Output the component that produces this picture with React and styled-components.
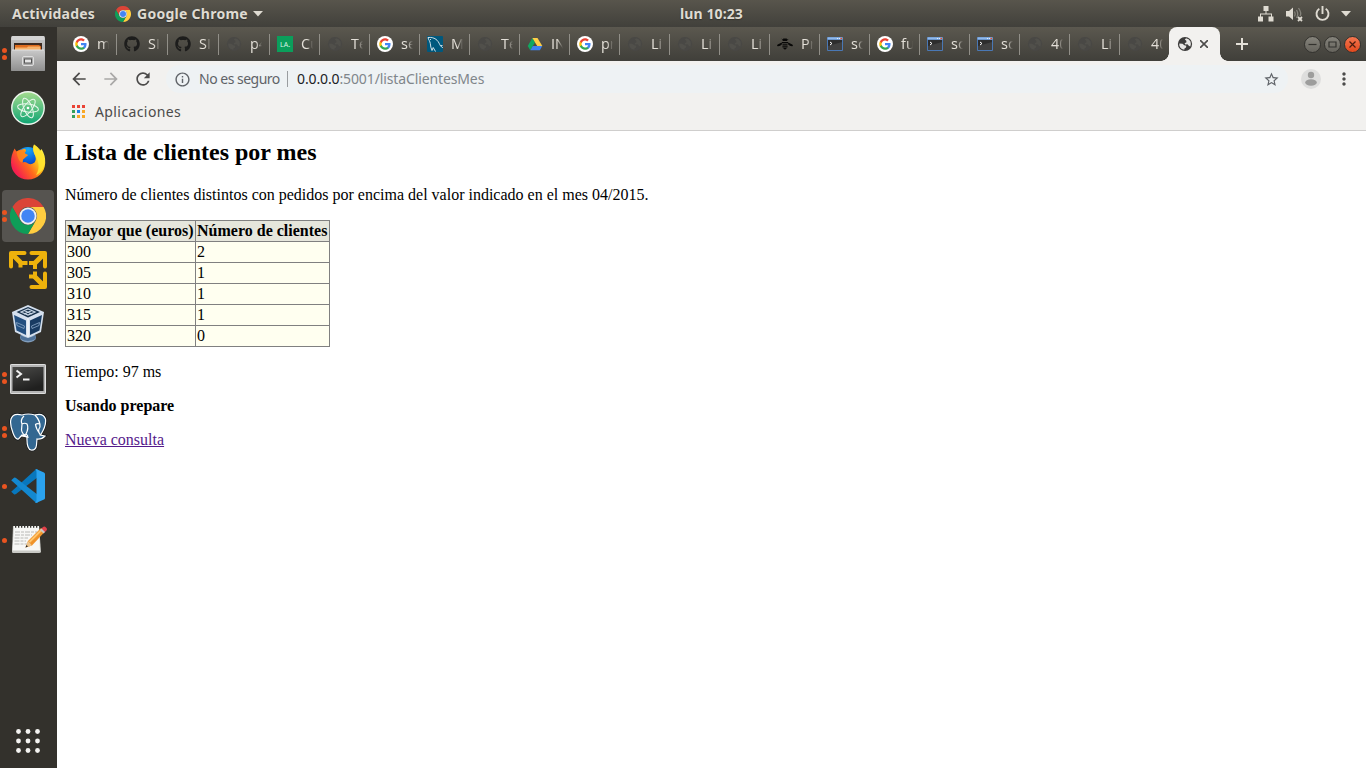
import React from "react";
import styled, { createGlobalStyle, css } from "styled-components";
import { FaGithub } from "react-icons/fa";
import {
  MdArrowBack,
  MdArrowForward,
  MdRefresh,
  MdInfoOutline,
  MdStarBorder,
  MdMoreVert,
} from "react-icons/md";

const GlobalStyle = createGlobalStyle`
  html, body, #root { height: 100%; }
  body { margin: 0; overflow: hidden; background: #fff; }
  * { box-sizing: border-box; }
  svg { display: block; flex: none; }
`;

const uiFont = css`
  font-family: "Noto Sans", "Open Sans", sans-serif;
`;

const Desktop = styled.div`
  width: 1366px;
  height: 768px;
  display: flex;
  flex-direction: column;
  ${uiFont}
`;

const TopBar = styled.header`
  height: 27px;
  flex: none;
  display: grid;
  grid-template-columns: 668px auto 1fr;
  align-items: center;
  padding: 0 15px 0 12px;
  background: linear-gradient(#58554c, #41403b);
  color: #dfdbd2;
  font-size: 14px;
  font-weight: 700;
  line-height: 26px;
  white-space: nowrap;
`;

const TopLeft = styled.div`
  display: flex;
  align-items: center;
`;

const TopLabel = styled.span`
  letter-spacing: ${(p) => p.$spacing || "0"};
  width: ${(p) => p.$width};
  margin-right: ${(p) => p.$gap || "0"};
  text-shadow: 0 1px 1px #33322d;
`;

const AppMenu = styled.div`
  display: flex;
  align-items: center;
  gap: 6px;
`;

const TopRight = styled.div`
  display: flex;
  align-items: center;
  justify-content: flex-end;
`;

const StatusIcon = styled.span`
  margin-left: ${(p) => p.$gap}px;
`;

const Body = styled.div`
  flex: 1;
  min-height: 0;
  display: flex;
`;

const Dock = styled.nav`
  width: 57px;
  flex: none;
  display: flex;
  flex-direction: column;
  background: #33312c;
`;

const DockItem = styled.div`
  height: 54px;
  flex: none;
  display: flex;
  align-items: center;
  padding-left: 2px;
`;

const DockTile = styled.div`
  width: 52px;
  height: 52px;
  display: flex;
  align-items: center;
  border-radius: 4px;
  background: ${(p) => (p.$active ? "#565450" : "transparent")};
`;

const DockDots = styled.div`
  width: 6px;
  display: flex;
  flex-direction: column;
  gap: 2px;
`;

const DockDot = styled.i`
  width: 5px;
  height: 5px;
  border-radius: 50%;
  background: #e95420;
`;

const DockIcon = styled.span`
  display: flex;
  align-items: center;
  justify-content: center;
  width: 40px;
  height: 40px;
`;

const AppsButton = styled.div`
  margin-top: auto;
  height: 54px;
  padding: 14px 0 0 15px;
`;

const Browser = styled.main`
  flex: 1;
  min-width: 0;
  display: flex;
  flex-direction: column;
`;

const TabStrip = styled.div`
  height: 34px;
  flex: none;
  display: flex;
  padding-left: 8px;
  background: linear-gradient(#5b584f, #403f3a);
`;

const Tab = styled.div`
  width: ${(p) => p.$width}px;
  flex: none;
  display: flex;
  align-items: center;
`;

const TabDivider = styled.i`
  width: 1px;
  height: 21px;
  margin-right: 7px;
  background: ${(p) => (p.$hidden ? "transparent" : "#918f88")};
`;

const TabIcon = styled.span`
  width: 16px;
  height: 16px;
  flex: none;
  margin-right: 8px;
`;

const TabTitle = styled.span`
  width: 12px;
  overflow: hidden;
  white-space: nowrap;
  color: #e4e0d8;
  font-family: "Open Sans", sans-serif;
  font-size: 14.5px;
  line-height: 20px;
  mask-image: linear-gradient(90deg, #000 50%, transparent);
`;

const ActiveTab = styled.div`
  position: relative;
  width: 51px;
  height: 34px;
  flex: none;
  display: flex;
  align-items: center;
  gap: 7px;
  padding-left: 8px;
  border-radius: 8px 8px 0 0;
  background: #f2f1ef;
  &::before, &::after {
    content: "";
    position: absolute;
    bottom: 0;
    width: 8px;
    height: 8px;
  }
  &::before { left: -8px; background: radial-gradient(circle at 0 0, transparent 7.5px, #f2f1ef 8px); }
  &::after { right: -8px; background: radial-gradient(circle at 100% 0, transparent 7.5px, #f2f1ef 8px); }
`;

const NewTab = styled.div`
  margin: 11px 0 0 16px;
`;

const WindowButtons = styled.div`
  display: flex;
  align-items: center;
  gap: 3px;
  margin-left: auto;
  padding-right: 5px;
`;

const WindowButton = styled.span`
  width: 17px;
  height: 17px;
  border-radius: 50%;
  border: 1px solid #34332f;
  background: ${(p) =>
    p.$close ? "linear-gradient(#f4764f, #e2491d)" : "linear-gradient(#85837b, #66645d)"};
`;

const Toolbar = styled.div`
  height: 35px;
  flex: none;
  display: flex;
  align-items: center;
  padding: 1px 12px 0 12px;
  background: #f2f1ef;
`;

const NavIcon = styled.span`
  width: 20px;
  height: 20px;
  margin-right: 12px;
  color: ${(p) => (p.$off ? "#a9a8a7" : "#4c4b4a")};
`;

const Omnibox = styled.div`
  height: 28px;
  width: 1124px;
  display: flex;
  align-items: center;
  margin-left: 1px;
  padding: 0 8px;
  border-radius: 14px;
  background: #eef2f4;
  color: #5f6368;
  font-size: 14px;
  line-height: 20px;
  white-space: nowrap;
`;

const Security = styled.span`
  width: 88px;
  margin-left: 8px;
  letter-spacing: -0.5px;
`;

const OmniDivider = styled.i`
  width: 1px;
  height: 16px;
  margin-right: 9px;
  background: #9a9da0;
`;

const Url = styled.span`
  flex: 1;
  color: #80868b;
  letter-spacing: -0.12px;
`;

const UrlHost = styled.span`
  color: #202124;
`;

const Avatar = styled.span`
  margin: 0 13px 0 13px;
`;

const Bookmarks = styled.div`
  height: 35px;
  flex: none;
  display: flex;
  align-items: center;
  gap: 10px;
  padding: 0 0 4px 15px;
  border-bottom: 1px solid #cfcecd;
  background: #f2f1ef;
  color: #4c4b4a;
  font-size: 14px;
`;

const BookmarkLabel = styled.span`
  letter-spacing: 0.4px;
`;

const Page = styled.section`
  flex: 1;
  padding: 8px;
  background: #fff;
  color: #000;
  font: 16px/18px "Liberation Serif", serif;
`;

const Heading = styled.h2`
  margin: 0 0 20px;
  font-size: 24px;
  line-height: 27px;
`;

const Paragraph = styled.p`
  margin: 0 0 16px;
`;

const Table = styled.table`
  width: 265px;
  margin-bottom: 16px;
  border-collapse: collapse;
  background: #fffff0;
  th, td { border: 1px solid #808080; padding: 1px; text-align: left; }
  th { background: #e6e6dc; }
`;

const Link = styled.a`
  color: #551a8b;
  text-decoration: underline;
`;

const Chrome = ({ size }) => (
  <svg width={size} height={size} viewBox="0 0 48 48">
    <path fill="#db4437" d="M3.2 12A24 24 0 0 1 44.8 12H24A12 12 0 0 0 13.6 30Z" />
    <path fill="#ffcd40" d="M44.8 12A24 24 0 0 1 24 48L34.4 30A12 12 0 0 0 24 12Z" />
    <path fill="#0f9d58" d="M24 48A24 24 0 0 1 3.2 12L13.6 30A12 12 0 0 0 34.4 30Z" />
    <circle cx="24" cy="24" r="11.5" fill="#f1f1f1" />
    <circle cx="24" cy="24" r="9" fill="#4285f4" />
  </svg>
);

const Google = () => (
  <svg width="16" height="16" viewBox="0 0 32 32">
    <circle cx="16" cy="16" r="16" fill="#fff" />
    <g transform="translate(3.400 3.400) scale(1.050)">
      <path fill="#4285f4" d="M22.56 12.25c0-.78-.07-1.53-.2-2.25H12v4.26h5.92c-.26 1.37-1.04 2.53-2.21 3.31v2.77h3.57c2.08-1.92 3.28-4.74 3.28-8.09z" />
      <path fill="#34a853" d="M12 23c2.97 0 5.46-.98 7.28-2.66l-3.57-2.77c-.98.66-2.23 1.06-3.71 1.06-2.86 0-5.29-1.93-6.16-4.53H2.18v2.84C3.99 20.53 7.7 23 12 23z" />
      <path fill="#fbbc05" d="M5.84 14.09c-.22-.66-.35-1.36-.35-2.09s.13-1.43.35-2.09V7.07H2.18C1.43 8.55 1 10.22 1 12s.43 3.45 1.18 4.93l2.85-2.22.81-.62z" />
      <path fill="#ea4335" d="M12 5.38c1.62 0 3.06.56 4.21 1.64l3.15-3.15C17.45 2.09 14.97 1 12 1 7.7 1 3.99 3.47 2.18 7.07l3.66 2.84c.87-2.6 3.3-4.53 6.16-4.53z" />
    </g>
  </svg>
);

const Globe = ({ color, land }) => (
  <svg width="16" height="16" viewBox="0 0 16 16">
    <circle cx="8" cy="8" r="7.100" fill={color} />
    <path fill={land} d="M9 2.200Q12 2.500 13.500 5.500Q14.400 8 13.300 10.500L11.800 9.800L10.500 8.200L8.300 8.500L7.600 7.200L9.500 6.200L9.200 4.600L7.800 3.800ZM2.300 7.500L5.500 7.800L7.300 9.300L9.300 9.800L9 11.500L7.500 12.500L7.300 13.800Q3.500 13.300 2.300 9.500Z" />
  </svg>
);

const LazIcon = styled.span`
  display: flex;
  align-items: center;
  justify-content: center;
  width: 16px;
  height: 16px;
  background: #0b9e5b;
  color: #d8f2e4;
  font-size: 7px;
  line-height: 14px;
  padding-top: 2px;
`;

const MySql = () => (
  <svg width="16" height="16" viewBox="0 0 16 16" fill="none" stroke="#e6eef3" strokeWidth=".9">
    <rect width="16" height="16" rx="1" fill="#00587d" stroke="none" />
    <path d="M1 1.5C4 1.2 7.5 1.6 10 4.200C12 6.200 12.500 8.500 13.300 9.500L15.800 12M13.300 9.700L15.500 9.500M1 1.500C1.500 4 3 5 3.300 7.500C3.500 10 4 12.500 5 14.500L6.200 11.500L8.500 15.500M3 3L4 4" />
  </svg>
);

const Drive = () => (
  <svg width="16" height="16" viewBox="0 0 16 16">
    <path fill="#11a861" d="M5.400 2L8 6.400L3.300 14.300L.7 10Z" />
    <path fill="#ffcf48" d="M5.400 2H10.500L15.300 10H10.200Z" />
    <path fill="#3f82f0" d="M5.800 10H15.300L12.800 14.300H3.300Z" />
  </svg>
);

const Bee = () => (
  <svg width="16" height="16" viewBox="0 0 16 16" fill="#080807">
    <path d="M6.200 2.500H9.800L10.300 5H5.700Z" />
    <path d="M4.800 3L6 4.200M11.200 3L10 4.200" stroke="#080807" strokeWidth=".8" />
    <path d="M5 6H11V7.300H5Z" />
    <path d="M4.800 6.500L5 8.300Q3 10.500 .8 10.300Q-.5 9.500 .7 8.400ZM11.200 6.500L11 8.300Q13 10.500 15.200 10.300Q16.500 9.500 15.300 8.400Z" />
    <path d="M5.500 8.200H10.500V9.400H5.500ZM5.300 10.200H10.700L10.400 11.400H5.600ZM6 12.100H10L8 13.800Z" />
  </svg>
);

const TermFavicon = () => (
  <svg width="16" height="16" viewBox="0 0 16 16">
    <rect y="1" width="16" height="14" rx="1" fill="#4a78b5" />
    <rect x=".5" y="1.300" width="15" height="2.200" fill="#8fb8ea" />
    <rect x="1" y="4" width="14" height="10" fill="#2d2d2d" />
    <path d="M1 14V10L15 6V14Z" fill="#414141" />
    <path d="M3 6L5 7.500L3 9" fill="none" stroke="#fff" />
    <path d="M10 2h1v1h-1ZM12 2h1v1h-1Z" fill="#e6eefa" />
    <path d="M13.500 1.700h1.500v1.500h-1.500Z" fill="#e8502a" />
  </svg>
);

const favicons = {
  google: <Google />,
  github: <FaGithub size={16} color="#1d1d1c" />,
  globe: <Globe color="#494845" land="#51504b" />,
  laz: <LazIcon>LA.</LazIcon>,
  mysql: <MySql />,
  drive: <Drive />,
  bee: <Bee />,
  term: <TermFavicon />,
};

const tabs = [
  ["google", "m"], ["github", "SI"], ["github", "SI"], ["globe", "p4"],
  ["laz", "Cu"], ["globe", "Te"], ["google", "se"], ["mysql", "M"],
  ["globe", "Te"], ["drive", "IN"], ["google", "pr"], ["globe", "Li"],
  ["globe", "Li"], ["globe", "Li"], ["bee", "Pr"], ["term", "sc"],
  ["google", "fu"], ["term", "sc"], ["term", "sc"], ["globe", "40"],
  ["globe", "Li"], ["globe", "40"],
];

const Files = () => (
  <svg width="40" height="40" viewBox="0 0 40 40">
    <defs>
      <linearGradient id="cab" x1="0" y1="0" x2="0" y2="1">
        <stop offset="0" stopColor="#c9c9c9" />
        <stop offset="1" stopColor="#8f8f8f" />
      </linearGradient>
    </defs>
    <path d="M4.500 2H35.500Q37 2 37 4V36Q37 37 36 37H4Q3 37 3 36V4Q3 2 4.500 2Z" fill="url(#cab)" />
    <path d="M4.500 2H35.500L36.500 6H3.500Z" fill="#d4d4d4" />
    <path d="M6 9H34V18H6Z" fill="#3c2a20" />
    <path d="M7 11H31L33 12.500V17H7Z" fill="#df6d1e" />
    <path d="M7 13.500H19L20 12.500H32V18H7Z" fill="#f6b26a" />
    <path d="M4 16H36L37 18V35.500Q37 37 35.500 37H4.500Q3 37 3 35.500V18Z" fill="url(#cab)" />
    <path d="M4 16H36" stroke="#e2e2e2" />
    <rect x="14.500" y="22.500" width="11" height="9" rx="1.500" fill="#aaa" stroke="#dedede" />
    <rect x="16.500" y="25" width="7" height="4" fill="#e5e5e5" stroke="#555" />
  </svg>
);

const Atom = () => (
  <svg width="40" height="40" viewBox="0 0 40 40">
    <defs>
      <linearGradient id="atom" x1="0" y1="0" x2="0" y2="1">
        <stop offset="0" stopColor="#a5dc8e" />
        <stop offset="1" stopColor="#0fa574" />
      </linearGradient>
    </defs>
    <circle cx="20" cy="20" r="16.200" fill="url(#atom)" stroke="#eef5ee" strokeWidth="1.400" />
    <g fill="none" stroke="#e9f8ec" strokeWidth="1">
      <ellipse cx="20" cy="20" rx="10.500" ry="4" transform="rotate(8 20 20)" />
      <ellipse cx="20" cy="20" rx="10.500" ry="4" transform="rotate(68 20 20)" />
      <ellipse cx="20" cy="20" rx="10.500" ry="4" transform="rotate(128 20 20)" />
    </g>
    <circle cx="20" cy="20" r="1.300" fill="#fff" />
  </svg>
);

const Firefox = () => (
  <svg width="40" height="40" viewBox="0 0 40 40">
    <defs>
      <linearGradient id="fox" x1=".9" y1=".15" x2=".1" y2=".7">
        <stop offset="0" stopColor="#fff044" />
        <stop offset=".3" stopColor="#ffc81a" />
        <stop offset=".62" stopColor="#ff6a1c" />
        <stop offset="1" stopColor="#f5204f" />
      </linearGradient>
      <radialGradient id="ffsea" cx=".5" cy=".1" r=".8">
        <stop offset="0" stopColor="#16a9f5" />
        <stop offset=".55" stopColor="#0a5ad8" />
        <stop offset="1" stopColor="#29227c" />
      </radialGradient>
    </defs>
    <circle cx="20" cy="18.500" r="13.500" fill="url(#ffsea)" />
    <path fill="url(#fox)" d="M26 2.500Q29 4 32 9L33.500 7Q37.500 13 37.200 21C37 30 29.500 37.500 20 37.500C10.500 37.500 3 30 3 20.500C3 15 4 12 6.500 6.500L8.500 9.500Q10 8 14 7.500Q18 5.500 18 9L16.500 11Q18 12.500 20 13L15 17.500L14.500 20.500Q17.500 19 20 21.500Q23 23.500 26.500 20.500Q29 17 26.500 12Q24 7 26 2.500Z" />
    <path fill="#ffe530" opacity=".85" d="M26 2.500C31 5 36.500 12 36.500 20C36 27 33 31 28 33C32 27 31 20 28 15Q23.500 8 26 2.500Z" />
    <path fill="#ff8a1c" opacity=".8" d="M8.500 9.500Q11 8 17.500 8.500L16.500 11Q18 12.500 20 13L15 17.500L14.500 20.500Q10 20 8.500 9.500Z" />
  </svg>
);

const VmWare = () => (
  <svg width="40" height="40" viewBox="0 0 40 40" fill="none" stroke="#eeb20c" strokeWidth="4" strokeLinejoin="round">
    <path d="M3 16.500V3H16.500M23.500 3H37V16.500M37 23.500V37H23.500" strokeLinecap="round" />
    <path d="M3 3L12.500 12.500M37 3L27 13M37 37L26.500 26.500" strokeWidth="5" />
    <path d="M12.500 17.500V13H19.500M21 13H27V19M27 21.500V26.500H21" />
  </svg>
);

const VirtualBox = () => (
  <svg width="40" height="40" viewBox="0 0 40 40">
    <ellipse cx="20" cy="33.500" rx="8" ry="5" fill="#819dbc" />
    <path d="M12.500 31Q20 36.500 27.500 31V35Q20 39 12.500 35Z" fill="#4f7299" />
    <path d="M4 8L20 1L36 8L33 28L20 34L7 28Z" fill="#d5e0ee" />
    <path d="M8.500 8L20 3L32 8L20 13.500Z" fill="#17304a" />
    <path d="M6 11L18 16.500V31L8.500 26.500Z" fill="#234f80" />
    <path d="M22 16.500L34 11L31.500 26.500L22 31Z" fill="#183b62" />
    <path d="M13 8L20 5L27 8L20 11ZM16 6.500L24 10M24 6.500L16 10" stroke="#c9d7e6" fill="none" strokeWidth="1.200" />
    <path d="M8.500 18.500L16.500 22L16 24.500L9 21.500ZM23.500 22L31.500 18.500L31 21.500L24 24.500Z" stroke="#7f9dbd" fill="none" strokeWidth=".9" />
    <path d="M20 14V33" stroke="#fff" />
  </svg>
);

const Terminal = () => (
  <svg width="40" height="40" viewBox="0 0 40 40">
    <defs>
      <linearGradient id="scr" x1="0" y1="0" x2=".4" y2="1">
        <stop offset="0" stopColor="#4a4a48" />
        <stop offset="1" stopColor="#20201f" />
      </linearGradient>
    </defs>
    <rect x="2" y="6" width="36" height="30" rx="1.500" fill="#b4b4b4" />
    <rect x="2.500" y="6.500" width="35" height="29" rx="1" fill="none" stroke="#dedede" />
    <rect x="4.500" y="9" width="31" height="24" fill="url(#scr)" />
    <path d="M8.500 12.500L13 16L8.500 19.500M15 21.500H21.500" fill="none" stroke="#f2f2f2" strokeWidth="2" />
  </svg>
);

const VsCode = () => (
  <svg width="40" height="40" viewBox="0 0 40 40">
    <path fill="#0877bd" d="M3.200 25.800L6 28.200Q7 28.800 8 28L30 11V3.500L28 3.200Z" />
    <path fill="#1388d0" d="M3.200 14.200L6 11.800Q7 11.200 8 12L30 29V36.500L28 36.800Z" />
    <path fill="#2ba2ee" d="M28 3L36 6.500Q37 7 37 8V32Q37 33 36 33.500L28 37Q27 37 27.500 36Q28.500 35.500 28.500 34V6Q28.500 4 27.500 3.500Z" />
  </svg>
);

const Notes = () => (
  <svg width="40" height="40" viewBox="0 0 40 40">
    <path d="M5 6H31L33 31.500Q33 33 31 33H5Q4 33 4 31.500Z" fill="#c9c9c5" />
    <path d="M6 6H31L32 30.500H4.500Z" fill="#f7f7f5" />
    <path d="M7 6H31" stroke="#34332f" strokeWidth="3.500" strokeDasharray="1.300 1.700" />
    <path d="M7 12H29M7 15H24M6.500 18H20M6.500 21H18M6.500 24H22" stroke="#b9b9b6" strokeWidth="1" strokeDasharray="5 1 3 1" />
    <path d="M17.500 27.500L20 21L33 8L37 11.500L24 25.500Z" fill="#f0932a" />
    <path d="M21.500 22L34 9.500" stroke="#ffc56e" strokeWidth="1.800" />
    <path d="M33 9L35 7Q36.500 6 38 7.500Q40 9 38.500 10.500L36.500 12.500Z" fill="#e0414a" />
    <path d="M32 10L33.500 8.500L37 12L35.500 13.500Z" fill="#c9c9c9" />
    <path d="M17.500 27.500L20 21L24 25.500Z" fill="#ecc58f" />
    <path d="M17.500 27.500L18.500 25L20 26.500Z" fill="#222" />
  </svg>
);

const Postgres = () => (
  <svg width="40" height="40" viewBox="0 0 40 40">
    <path d="M14 3Q5 .5 3 7Q1.500 12 5 21Q7.500 28 10.500 27L14 23L19 25Q18.500 37 23 38Q28 38.500 28.500 33L29 27Q34 27.500 37 24L32.500 23Q38.500 14 37.500 7Q35 .5 27 3Q20 1 14 3Z" fill="#336791" stroke="#10171d" strokeWidth="2.500" />
    <path d="M14 3Q5 .5 3 7Q1.500 12 5 21Q7.500 28 10.500 27L14 23L19 25Q18.500 37 23 38Q28 38.500 28.500 33L29 27Q34 27.500 37 24L32.500 23Q38.500 14 37.500 7Q35 .5 27 3Q20 1 14 3Z" fill="#336791" stroke="#fff" strokeWidth="1.200" />
    <path d="M16 4Q12 8 14 12L13.500 18Q14 22 19 25M14 12Q17 10.500 19 12Q21 16 18 22L14 24L19 25M27 3Q32.500 9 32 15Q29 19 32.500 23M32 12Q29 11 27.500 12.500Q28 17 32 22M18 22Q20 23 20 26" fill="none" stroke="#fff" strokeWidth="1.200" />
  </svg>
);

const dock = [
  { icon: <Files />, dots: 2 },
  { icon: <Atom />, dots: 0 },
  { icon: <Firefox />, dots: 0 },
  { icon: <Chrome size={36} />, dots: 2, active: true },
  { icon: <VmWare />, dots: 0 },
  { icon: <VirtualBox />, dots: 0 },
  { icon: <Terminal />, dots: 2 },
  { icon: <Postgres />, dots: 2 },
  { icon: <VsCode />, dots: 1 },
  { icon: <Notes />, dots: 1 },
];

const rows = [[300, 2], [305, 1], [310, 1], [315, 1], [320, 0]];
const bookmarkColors = ["#ea4335", "#ea4335", "#ea4335", "#34a05a", "#1a82e8", "#f9a825", "#34a05a", "#f9a825", "#f9a825"];

const Caret = () => (
  <svg width="10" height="6" viewBox="0 0 10 6"><path d="M0 0H10L5 5.500Z" fill="#dfdbd2" /></svg>
);

export default function App() {
  return (
    <Desktop>
      <GlobalStyle />
      <TopBar>
        <TopLeft>
          <TopLabel $width="83px" $gap="20px" $spacing="0.2px">Actividades</TopLabel>
          <AppMenu>
            <Chrome size={16} />
            <TopLabel $width="110px" $spacing="0.27px">Google Chrome</TopLabel>
            <Caret />
          </AppMenu>
        </TopLeft>
        <TopLabel $spacing="0.1px">lun 10:23</TopLabel>
        <TopRight>
          <StatusIcon $gap={0}>
            <svg width="16" height="16" viewBox="0 0 16 16" fill="#dfdbd2">
              <path d="M5.500 0h5v5h-5ZM0 10.500h5v5H0ZM10.500 10.500h5v5h-5ZM7.500 5h1v2.500H14v3h-1V8.500H3v2H2V7.500h5.500Z" />
            </svg>
          </StatusIcon>
          <StatusIcon $gap={12}>
            <svg width="17" height="16" viewBox="0 0 17 16" fill="none">
              <path d="M0 5H3L7 1.500V14L3 10.500H0Z" fill="#dfdbd2" />
              <path d="M8.500 5.500Q10 8 8.500 10.500M10.500 4Q13 8 10.500 12M12.500 2Q16 7 14 10" stroke="#85837b" strokeWidth="1.300" />
              <path d="M12 11L16 15M16 11L12 15" stroke="#dfdbd2" strokeWidth="1.800" />
            </svg>
          </StatusIcon>
          <StatusIcon $gap={12}>
            <svg width="15" height="16" viewBox="0 0 15 16" fill="none" stroke="#dfdbd2" strokeWidth="1.900">
              <path d="M4.300 2.800A6 6 0 1 0 10.700 2.800M7.500 0V8" />
            </svg>
          </StatusIcon>
          <StatusIcon $gap={11}><Caret /></StatusIcon>
        </TopRight>
      </TopBar>
      <Body>
        <Dock>
          {dock.map((d, i) => (
            <DockItem key={i}>
              <DockTile $active={d.active}>
                <DockDots>
                  {Array.from({ length: d.dots }, (_, k) => <DockDot key={k} />)}
                </DockDots>
                <DockIcon>{d.icon}</DockIcon>
              </DockTile>
            </DockItem>
          ))}
          <AppsButton>
            <svg width="26" height="26" viewBox="0 0 26 26" fill="#f4f3f1">
              {[3.5, 13, 22.5].map((y) => [3.5, 13, 22.5].map((x) => <circle key={`${x}-${y}`} cx={x} cy={y} r="2.400" />))}
            </svg>
          </AppsButton>
        </Dock>
        <Browser>
          <TabStrip>
            {tabs.map(([icon, title], i) => (
              <Tab key={i} $width={i < 4 ? 51 : 50}>
                <TabDivider $hidden={i === 0} />
                <TabIcon>{favicons[icon]}</TabIcon>
                <TabTitle>{title}</TabTitle>
              </Tab>
            ))}
            <ActiveTab>
              <Globe color="#3c3b3a" land="#e6e5e3" />
              <svg width="8" height="8" viewBox="0 0 8 8" stroke="#4c4b4a" strokeWidth="1.600"><path d="M0 0L8 8M8 0L0 8" /></svg>
            </ActiveTab>
            <NewTab>
              <svg width="12" height="12" viewBox="0 0 12 12" stroke="#e4e0d8" strokeWidth="2"><path d="M6 0V12M0 6H12" /></svg>
            </NewTab>
            <WindowButtons>
              {["M3.500 7.500H11.500", "M4 5H11V10H4Z", "M4.500 4.500L10.500 10.500M10.500 4.500L4.500 10.500"].map((d, i) => (
                <WindowButton key={d} $close={i === 2}>
                  <svg width="15" height="15" viewBox="0 0 15 15" fill="none" stroke={i === 2 ? "#4a1c0e" : "#33322e"} strokeWidth="1.200"><path d={d} /></svg>
                </WindowButton>
              ))}
            </WindowButtons>
          </TabStrip>
          <Toolbar>
            <NavIcon><MdArrowBack size={20} /></NavIcon>
            <NavIcon $off><MdArrowForward size={20} /></NavIcon>
            <NavIcon><MdRefresh size={20} /></NavIcon>
            <Omnibox>
              <MdInfoOutline size={17} />
              <Security>No es seguro</Security>
              <OmniDivider />
              <Url><UrlHost>0.0.0.0</UrlHost>:5001/listaClientesMes</Url>
              <MdStarBorder size={17} />
            </Omnibox>
            <Avatar>
              <svg width="20" height="20" viewBox="0 0 20 20">
                <circle cx="10" cy="10" r="10" fill="#dededd" />
                <circle cx="10" cy="6" r="3.200" fill="#9d9d9c" />
                <ellipse cx="10" cy="13.500" rx="5.800" ry="3.200" fill="#9d9d9c" />
              </svg>
            </Avatar>
            <MdMoreVert size={20} color="#4c4b4a" />
          </Toolbar>
          <Bookmarks>
            <svg width="13" height="13" viewBox="0 0 13 13">
              {bookmarkColors.map((c, i) => (
                <rect key={i} x={(i % 3) * 5} y={Math.floor(i / 3) * 5} width="3" height="3" fill={c} />
              ))}
            </svg>
            <BookmarkLabel>Aplicaciones</BookmarkLabel>
          </Bookmarks>
          <Page>
            <Heading>Lista de clientes por mes</Heading>
            <Paragraph>Número de clientes distintos con pedidos por encima del valor indicado en el mes 04/2015.</Paragraph>
            <Table>
              <thead><tr><th>Mayor que (euros)</th><th>Número de clientes</th></tr></thead>
              <tbody>
                {rows.map(([a, b]) => <tr key={a}><td>{a}</td><td>{b}</td></tr>)}
              </tbody>
            </Table>
            <Paragraph>Tiempo: 97 ms</Paragraph>
            <Paragraph><b>Usando prepare</b></Paragraph>
            <Link href="#">Nueva consulta</Link>
          </Page>
        </Browser>
      </Body>
    </Desktop>
  );
}
